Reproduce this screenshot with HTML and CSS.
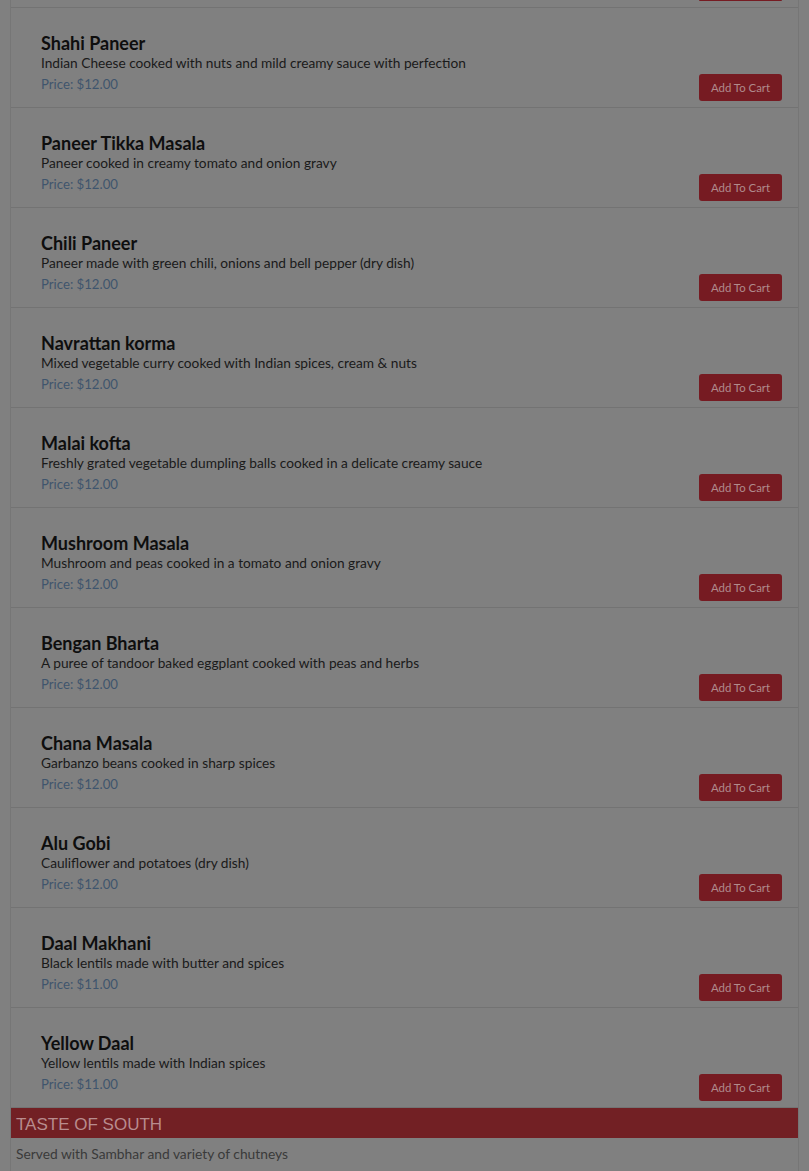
FILE: index.html
```html
<!DOCTYPE html>
<html lang="en">
<head>
<meta charset="utf-8">
<title>Menu</title>
<link rel="stylesheet" href="styles.css">
</head>
<body>
<div class="page">
  <div class="menu">
    <div class="list">
      <div class="item-tail"><span class="cart-tail"></span></div>
      <div class="item">
        <div class="info">
          <div class="name">Shahi Paneer</div>
          <div class="desc">Indian Cheese cooked with nuts and mild creamy sauce with perfection</div>
          <div class="price">Price: $12.00</div>
        </div>
        <button class="cart">Add To Cart</button>
      </div>
      <div class="item">
        <div class="info">
          <div class="name">Paneer Tikka Masala</div>
          <div class="desc">Paneer cooked in creamy tomato and onion gravy</div>
          <div class="price">Price: $12.00</div>
        </div>
        <button class="cart">Add To Cart</button>
      </div>
      <div class="item">
        <div class="info">
          <div class="name">Chili Paneer</div>
          <div class="desc">Paneer made with green chili, onions and bell pepper (dry dish)</div>
          <div class="price">Price: $12.00</div>
        </div>
        <button class="cart">Add To Cart</button>
      </div>
      <div class="item">
        <div class="info">
          <div class="name">Navrattan korma</div>
          <div class="desc">Mixed vegetable curry cooked with Indian spices, cream &amp; nuts</div>
          <div class="price">Price: $12.00</div>
        </div>
        <button class="cart">Add To Cart</button>
      </div>
      <div class="item">
        <div class="info">
          <div class="name">Malai kofta</div>
          <div class="desc">Freshly grated vegetable dumpling balls cooked in a delicate creamy sauce</div>
          <div class="price">Price: $12.00</div>
        </div>
        <button class="cart">Add To Cart</button>
      </div>
      <div class="item">
        <div class="info">
          <div class="name">Mushroom Masala</div>
          <div class="desc">Mushroom and peas cooked in a tomato and onion gravy</div>
          <div class="price">Price: $12.00</div>
        </div>
        <button class="cart">Add To Cart</button>
      </div>
      <div class="item">
        <div class="info">
          <div class="name">Bengan Bharta</div>
          <div class="desc">A puree of tandoor baked eggplant cooked with peas and herbs</div>
          <div class="price">Price: $12.00</div>
        </div>
        <button class="cart">Add To Cart</button>
      </div>
      <div class="item">
        <div class="info">
          <div class="name">Chana Masala</div>
          <div class="desc">Garbanzo beans cooked in sharp spices</div>
          <div class="price">Price: $12.00</div>
        </div>
        <button class="cart">Add To Cart</button>
      </div>
      <div class="item">
        <div class="info">
          <div class="name">Alu Gobi</div>
          <div class="desc">Cauliflower and potatoes (dry dish)</div>
          <div class="price">Price: $12.00</div>
        </div>
        <button class="cart">Add To Cart</button>
      </div>
      <div class="item">
        <div class="info">
          <div class="name">Daal Makhani</div>
          <div class="desc">Black lentils made with butter and spices</div>
          <div class="price">Price: $11.00</div>
        </div>
        <button class="cart">Add To Cart</button>
      </div>
      <div class="item">
        <div class="info">
          <div class="name">Yellow Daal</div>
          <div class="desc">Yellow lentils made with Indian spices</div>
          <div class="price">Price: $11.00</div>
        </div>
        <button class="cart">Add To Cart</button>
      </div>
    </div>
    <div class="section-head">TASTE OF SOUTH</div>
    <div class="section-note">Served with Sambhar and variety of chutneys</div>
  </div>
</div>
</body>
</html>
```

FILE: styles.css
```css
html, body {
  margin: 0;
  padding: 0;
  height: 100%;
  overflow: hidden;
}
body {
  background: #808080;
  font-family: "Lato", "Open Sans", sans-serif;
}
.page {
  padding: 0 10px;
}
.menu {
  border-left: 1px solid #767676;
  border-right: 1px solid #767676;
  background: #808080;
  min-height: 1400px;
}
.item-tail {
  box-sizing: border-box;
  height: 8px;
  border-bottom: 1px solid #737373;
  display: flex;
  justify-content: flex-end;
  padding-right: 16px;
}
.cart-tail {
  width: 83px;
  height: 1px;
  background: #761b22;
  border-radius: 0 0 3px 3px;
}
.item {
  box-sizing: border-box;
  height: 100px;
  border-bottom: 1px solid #737373;
  display: flex;
  justify-content: space-between;
  align-items: flex-end;
  padding: 0 16px 6px 30px;
}
.info {
  align-self: flex-start;
  padding-top: 25px;
}
.name {
  font-size: 18px;
  line-height: 20px;
  font-weight: 700;
  color: #0e0e0e;
}
.desc {
  font-size: 13.7px;
  line-height: 20px;
  color: #1a1a1a;
}
.price {
  margin-top: 1px;
  font-size: 13.2px;
  line-height: 20px;
  color: #3f556d;
}
.cart {
  width: 83px;
  height: 27px;
  border: 0;
  border-radius: 3px;
  background: #761b22;
  color: #b08a8c;
  font-family: "Lato", "Open Sans", sans-serif;
  font-size: 11.4px;
  padding: 0;
}
.section-head {
  height: 30px;
  background: #722024;
  color: #b88c8e;
  font-family: "Liberation Sans", Arial, sans-serif;
  font-size: 17px;
  line-height: 34px;
  padding-left: 5px;
}
.section-note {
  padding: 6px 5px;
  font-size: 13.8px;
  line-height: 20px;
  color: #3a3a3a;
}
```
